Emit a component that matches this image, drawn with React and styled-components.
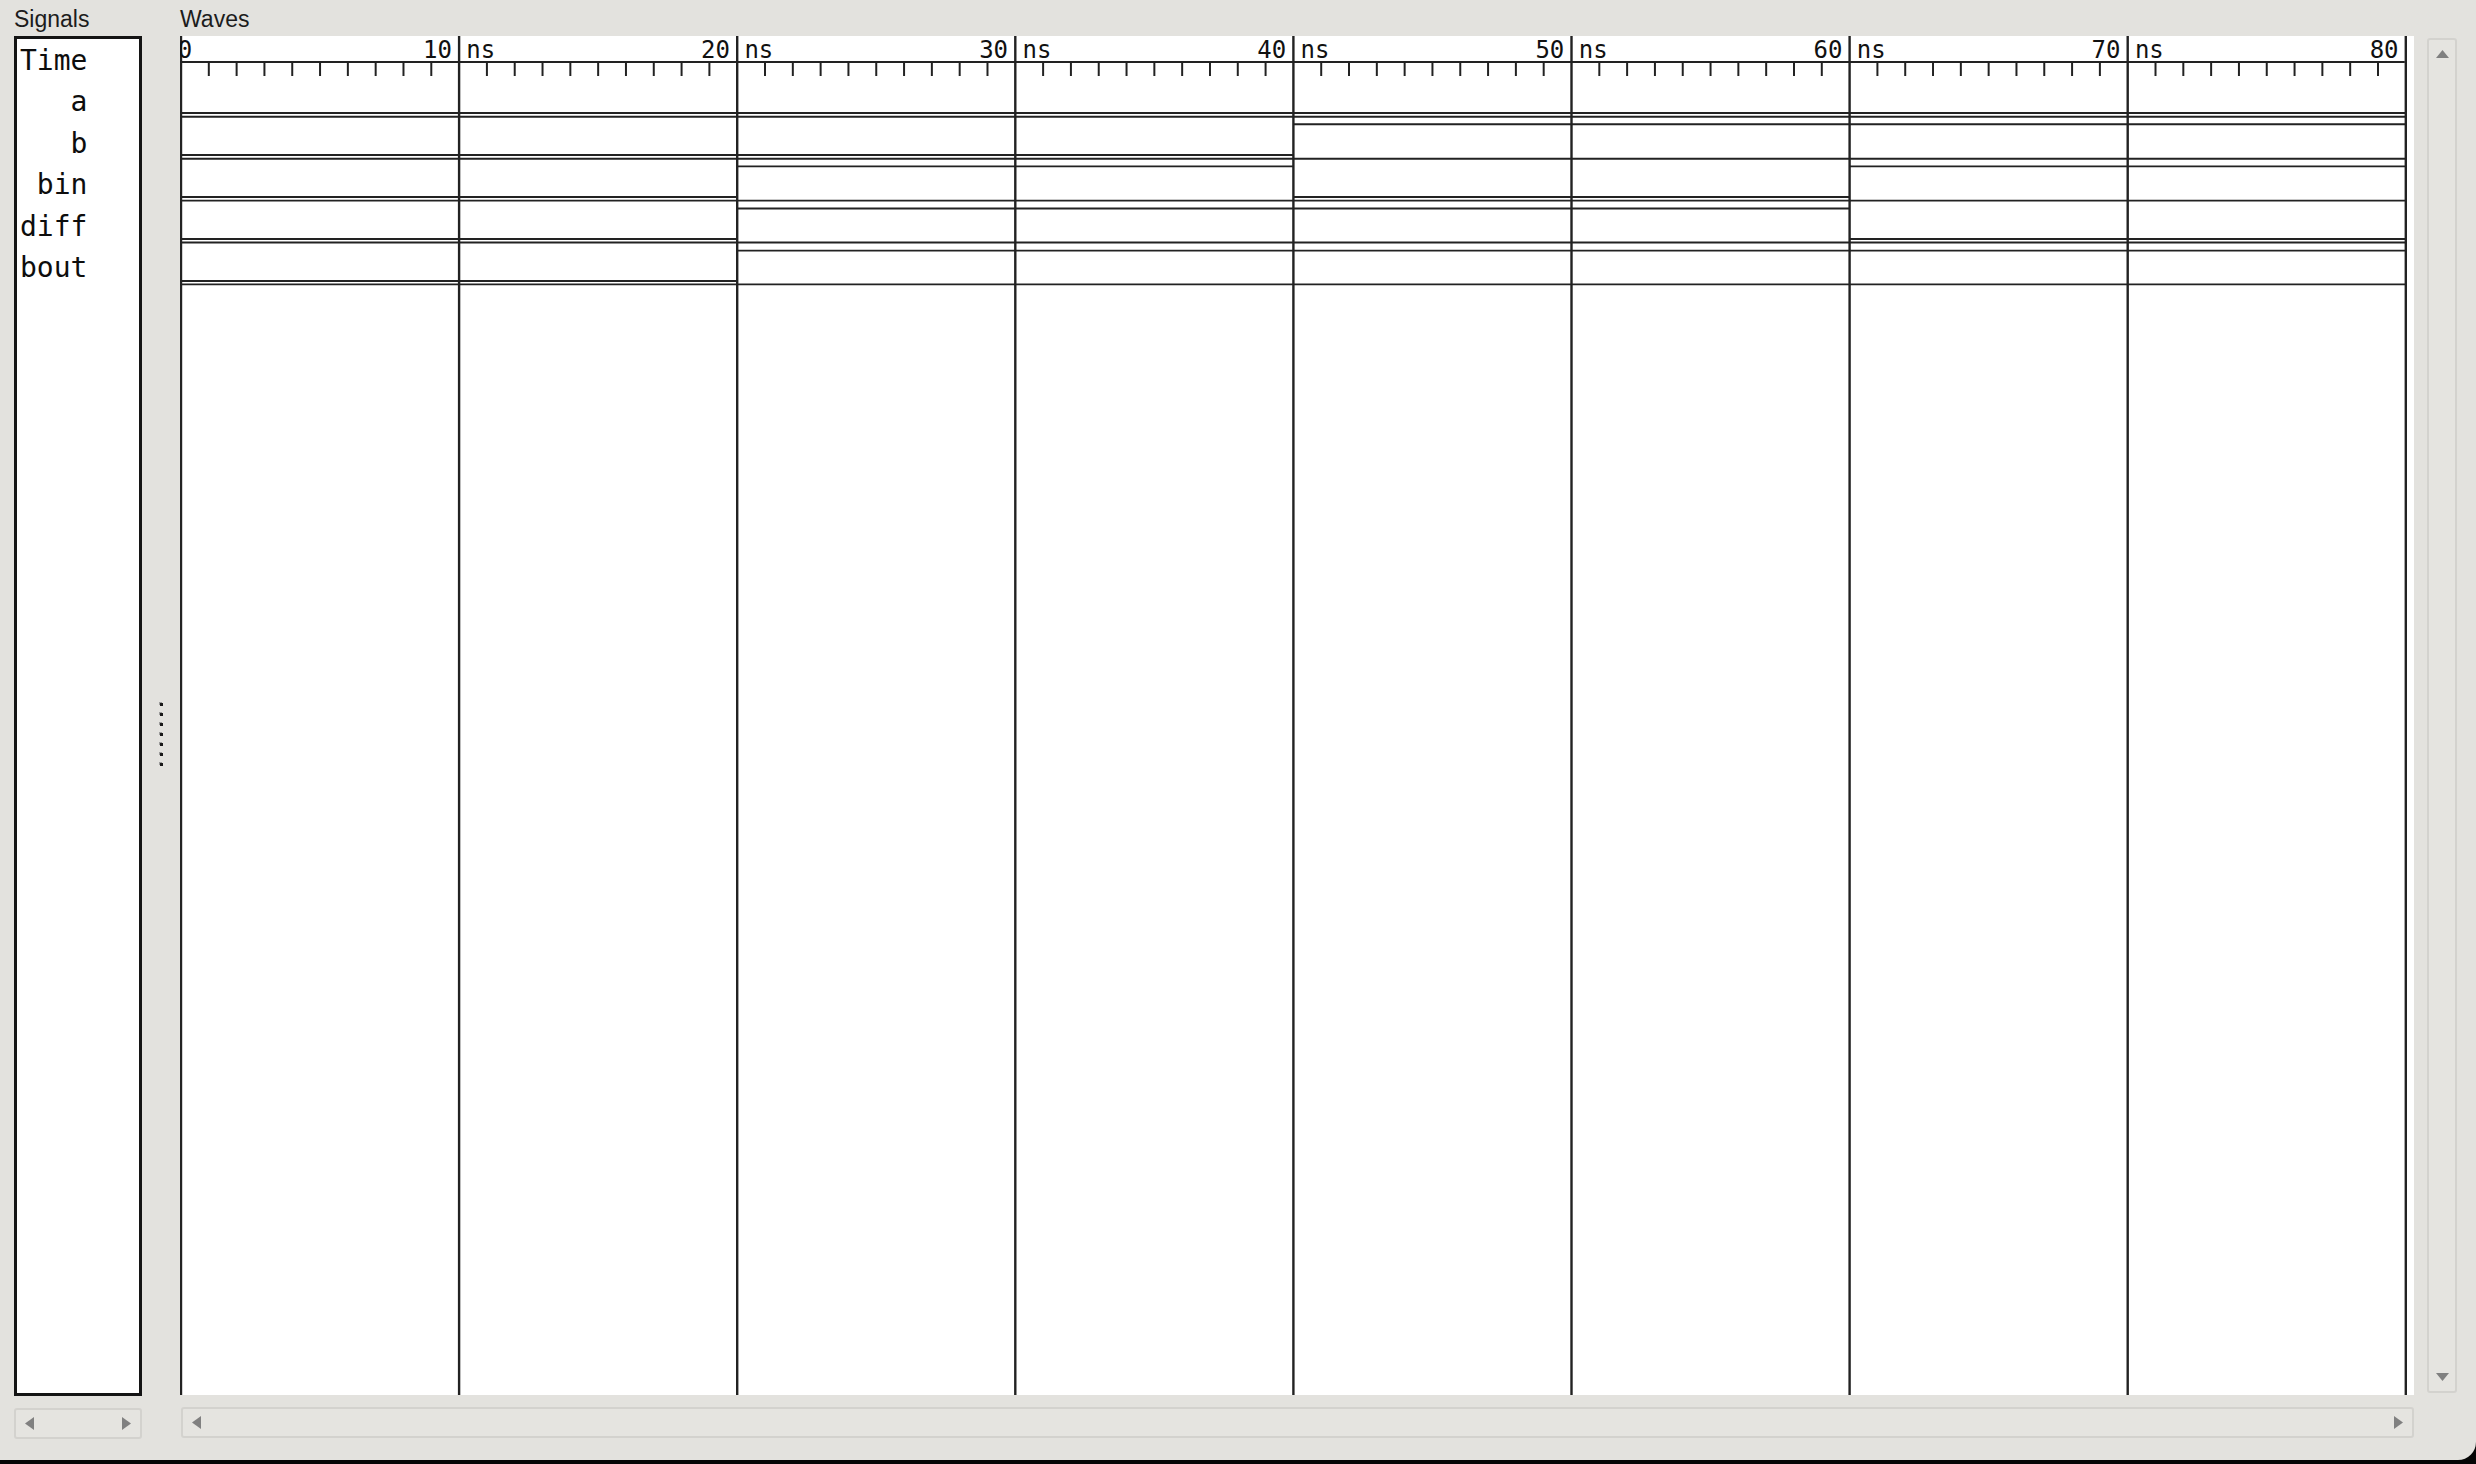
import React from 'react';
import styled, { createGlobalStyle } from 'styled-components';

const colors = {
  windowBg: '#e3e2de',
  ink: '#1c1c1c',
  wire: '#222',
  trough: '#e5e4e0',
  troughBorder: '#d3d2ce',
  arrow: '#808080',
};

const GlobalStyle = createGlobalStyle`
  html, body {
    margin: 0;
    padding: 0;
    background: #050505;
  }
  body {
    width: 2476px;
    height: 1464px;
    overflow: hidden;
  }
`;

const Window = styled.div`
  width: 2476px;
  height: 1460px;
  box-sizing: border-box;
  padding-left: 14px;
  display: flex;
  background: ${colors.windowBg};
  border-bottom-right-radius: 18px;
  font-family: 'Liberation Sans', Arial, sans-serif;
`;

const Pane = styled.div`
  width: ${(p) => p.width}px;
  display: flex;
  flex-direction: column;
`;

const PaneLabel = styled.div`
  height: 36px;
  font-size: 23px;
  line-height: 39px;
  color: ${colors.ink};
`;

const SignalBox = styled.div`
  height: 1360px;
  box-sizing: border-box;
  border: 3px solid #141414;
  background: #fff;
  padding: 1px 0 0 3px;
`;

const NameList = styled.div`
  width: 4ch;
  font-family: 'DejaVu Sans Mono', monospace;
  font-size: 28px;
  line-height: 41.4px;
  text-align: right;
  color: #0d0d0d;
`;

const Name = styled.div`
  white-space: pre;
`;

const Divider = styled.div`
  width: 38px;
  display: flex;
  align-items: center;
  justify-content: center;
  padding-top: 8px;
`;

const Grip = styled.div`
  display: flex;
  flex-direction: column;
  gap: 7px;
`;

const GripDot = styled.span`
  width: 3px;
  height: 3px;
  background: #1a1a1a;
  box-shadow: -1px -1px 0 #9a9a9a;
`;

const WaveCanvas = styled.div`
  height: 1359px;
  background: #fff;
  overflow: hidden;
`;

const ScrollTrough = styled.div`
  box-sizing: border-box;
  display: flex;
  align-items: center;
  justify-content: space-between;
  flex-direction: ${(p) => (p.vertical ? 'column' : 'row')};
  padding: ${(p) => (p.vertical ? '10px 0' : '0 9px')};
  background: ${colors.trough};
  border: 2px solid ${colors.troughBorder};
  border-radius: 3px;
`;

const HScroll = styled(ScrollTrough)`
  height: 31px;
  margin-top: 12px;
  margin-left: ${(p) => p.inset || 0}px;
  width: ${(p) => p.width}px;
`;

const ScrollColumn = styled.div`
  width: 62px;
  padding-left: 13px;
  box-sizing: border-box;
`;

const VScroll = styled(ScrollTrough)`
  width: 30px;
  height: 1355px;
  margin-top: 38px;
`;

const Arrow = ({ dir }) => {
  const shapes = {
    left: { w: 9, h: 13, pts: '9,0 9,13 0,6.5' },
    right: { w: 9, h: 13, pts: '0,0 0,13 9,6.5' },
    up: { w: 13, h: 8, pts: '0,8 13,8 6.5,0' },
    down: { w: 13, h: 8, pts: '0,0 13,0 6.5,8' },
  };
  const s = shapes[dir];
  return (
    <svg width={s.w} height={s.h} viewBox={`0 0 ${s.w} ${s.h}`}>
      <polygon points={s.pts} fill={colors.arrow} />
    </svg>
  );
};

// time axis of the wave canvas
const T0 = 1;
const PX_PER_NS = 27.81;
const END_NS = 80;
const CANVAS_W = 2234;
const CANVAS_H = 1359;
const xAt = (ns) => T0 + ns * PX_PER_NS;

const signals = ['a', 'b', 'bin', 'diff', 'bout'];

// a, b, bin, diff, bout
const vectors = [
  { from: 0, to: 20, bits: [0, 0, 0, 0, 0] },
  { from: 20, to: 40, bits: [0, 0, 1, 1, 1] },
  { from: 40, to: 60, bits: [0, 1, 0, 1, 1] },
  { from: 60, to: 80, bits: [0, 1, 1, 0, 1] },
];

const lowY = (k) => 77 + 42 * k;
const sepY = (k) => 80.8 + 41.9 * k;
const highY = (k) => 46.2 + 42.1 * k;

const majors = Array.from({ length: END_NS / 10 + 1 }, (_, i) => i * 10);
const minors = Array.from({ length: END_NS }, (_, i) => i).filter((n) => n % 10 !== 0);

const Waves = () => (
  <svg width={CANVAS_W} height={CANVAS_H} viewBox={`0 0 ${CANVAS_W} ${CANVAS_H}`}>
    <g stroke={colors.wire} fill="none">
      <line x1={xAt(0)} y1={26} x2={xAt(END_NS) - 1} y2={26} strokeWidth={2} />
      {minors.map((n) => (
        <line key={`t${n}`} x1={xAt(n)} y1={26} x2={xAt(n)} y2={40} strokeWidth={2} />
      ))}
      {majors.map((t) => (
        <line key={`g${t}`} x1={xAt(t)} y1={0} x2={xAt(t)} y2={CANVAS_H} strokeWidth={2.4} />
      ))}
      {signals.map((name, k) => (
        <g key={name} strokeWidth={1.9}>
          <line x1={xAt(0)} y1={sepY(k)} x2={xAt(END_NS)} y2={sepY(k)} />
          {vectors.map((v) => {
            const y = v.bits[k] ? highY(k) : lowY(k);
            return <line key={v.from} x1={xAt(v.from)} y1={y} x2={xAt(v.to)} y2={y} />;
          })}
        </g>
      ))}
    </g>
    <g fontFamily="'DejaVu Sans Mono', monospace" fontSize={24} fill="#111">
      <text x={5} y={22} textAnchor="middle">0</text>
      {majors.filter((t) => t > 0).map((t) => (
        <text key={`l${t}`} x={xAt(t)} y={22} textAnchor="middle" xmlSpace="preserve">
          {`${t} ns`}
        </text>
      ))}
    </g>
  </svg>
);

const App = () => (
  <React.Fragment>
    <GlobalStyle />
    <Window>
      <Pane width={128}>
        <PaneLabel>Signals</PaneLabel>
        <SignalBox>
          <NameList>
            {['Time', ...signals].map((n) => (
              <Name key={n}>{n}</Name>
            ))}
          </NameList>
        </SignalBox>
        <HScroll width={128}>
          <Arrow dir="left" />
          <Arrow dir="right" />
        </HScroll>
      </Pane>
      <Divider>
        <Grip>
          {Array.from({ length: 7 }, (_, i) => <GripDot key={i} />)}
        </Grip>
      </Divider>
      <Pane width={CANVAS_W}>
        <PaneLabel>Waves</PaneLabel>
        <WaveCanvas>
          <Waves />
        </WaveCanvas>
        <HScroll width={CANVAS_W - 1} inset={1}>
          <Arrow dir="left" />
          <Arrow dir="right" />
        </HScroll>
      </Pane>
      <ScrollColumn>
        <VScroll vertical>
          <Arrow dir="up" />
          <Arrow dir="down" />
        </VScroll>
      </ScrollColumn>
    </Window>
  </React.Fragment>
);

export default App;
